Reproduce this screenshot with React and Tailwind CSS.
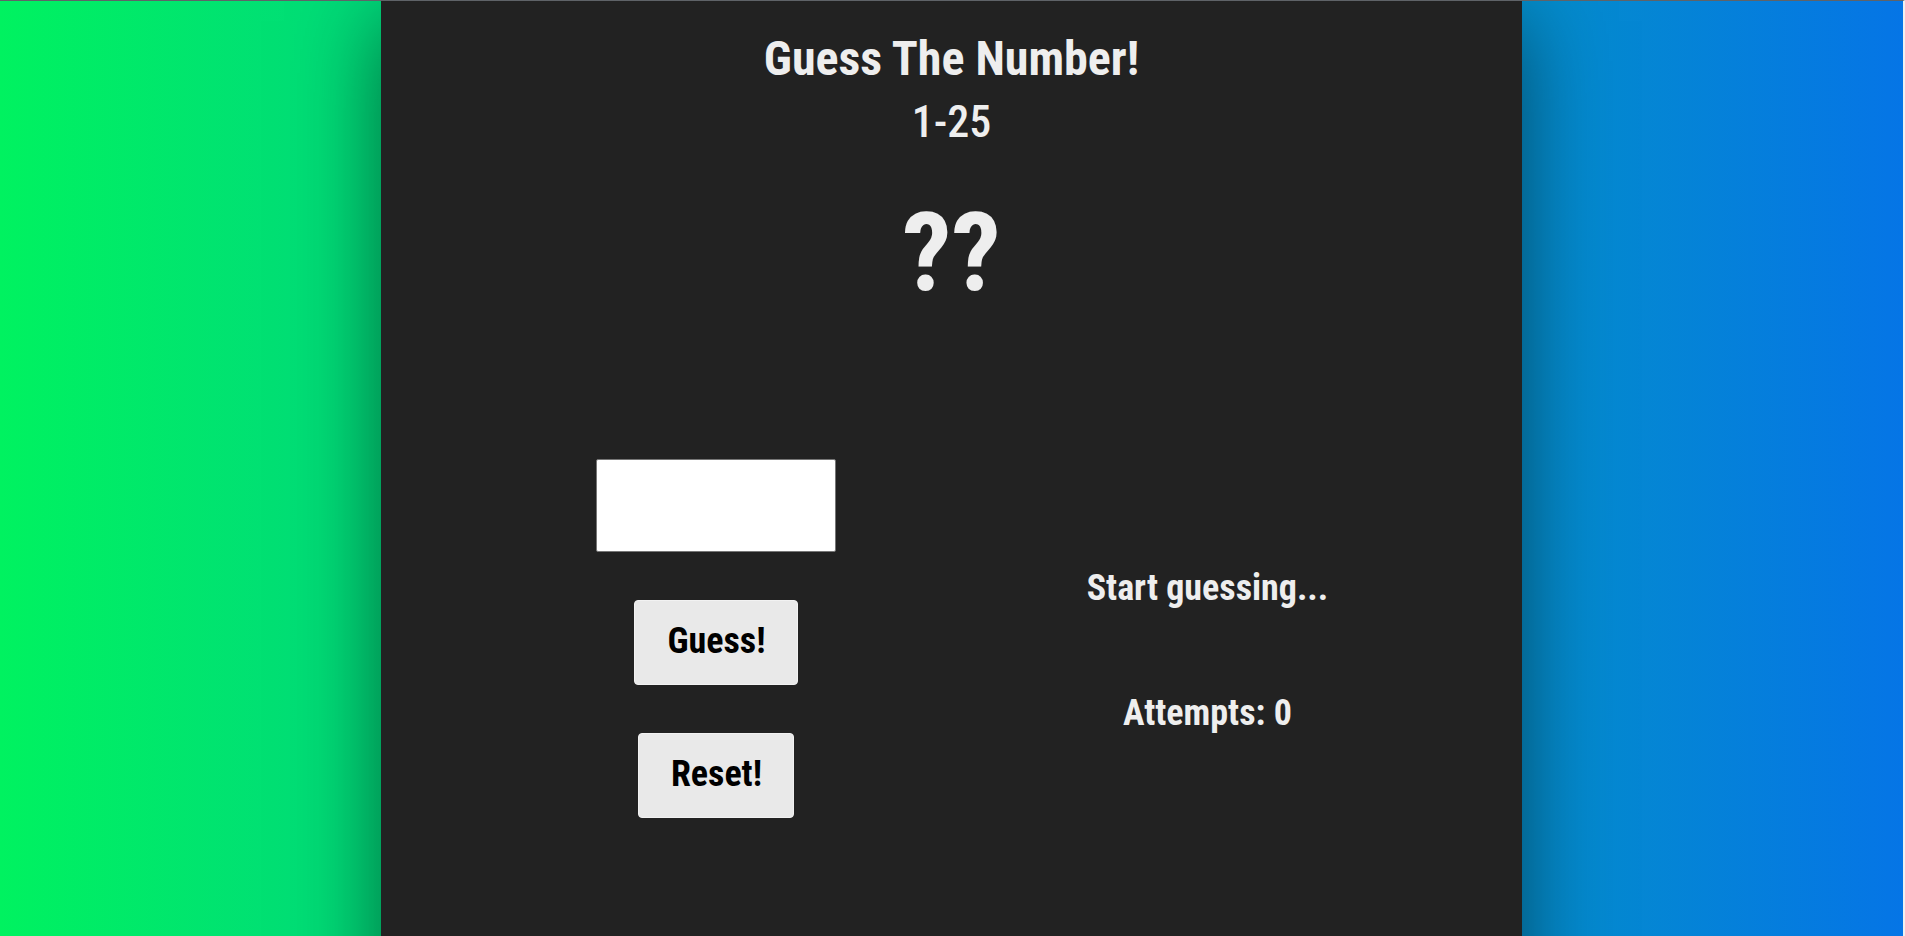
import { useState } from "react";

const BUTTON =
  "h-[85px] rounded border border-[#f2f2f2] bg-[#e9e9e9] pb-1 text-4xl text-black";

export default function App() {
  const [secret, setSecret] = useState(() => 1 + Math.floor(Math.random() * 25));
  const [guess, setGuess] = useState("");
  const [message, setMessage] = useState("Start guessing...");
  const [attempts, setAttempts] = useState(0);
  const [solved, setSolved] = useState(false);

  function submit(event) {
    event.preventDefault();
    const value = Number(guess);
    if (solved || !guess) return;
    setAttempts(attempts + 1);
    setSolved(value === secret);
    setMessage(value === secret ? "Correct!" : value > secret ? "Too high!" : "Too low!");
  }

  function reset() {
    setSecret(1 + Math.floor(Math.random() * 25));
    setGuess("");
    setMessage("Start guessing...");
    setAttempts(0);
    setSolved(false);
  }

  return (
    <div className="flex min-h-screen overflow-hidden border-t border-r-2 border-t-[#5f6368] border-r-[#f0f0f0] bg-linear-to-r/srgb from-[#00f260] to-[#0575e6] font-['Roboto_Condensed','Liberation_Sans_Narrow','Liberation_Sans',sans-serif] font-bold text-[#eeeeee]">
      <main className="mx-auto -mb-20 w-3/5 bg-[#222222] shadow-[0_20px_80px_rgba(0,0,0,0.5)]">
        <header className="flex flex-col items-center pt-7">
          <h1 className="text-5xl leading-[60px]">Guess The Number!</h1>
          <p className="mt-2 text-[44px] leading-[50px] font-medium">1-25</p>
          <p className="mt-12 text-[110px] leading-[116px]">{solved ? secret : "??"}</p>
        </header>
        <div className="mt-[148px] flex justify-center gap-64 pb-16 pl-4">
          <form onSubmit={submit} className="flex w-60 flex-col items-center gap-12">
            <input
              aria-label="Your guess"
              type="text"
              inputMode="numeric"
              value={guess}
              onChange={(e) => setGuess(e.target.value)}
              className="h-[93px] w-full rounded-xs border border-[#767676] bg-white px-4 text-center text-4xl text-black"
            />
            <button type="submit" className={BUTTON + " w-[164px]"}>Guess!</button>
            <button type="button" onClick={reset} className={BUTTON + " w-[156px]"}>Reset!</button>
          </form>
          <div className="flex w-[230px] flex-col items-center gap-[85px] pt-[109px] text-4xl whitespace-nowrap">
            <p>{message}</p>
            <p>Attempts: {attempts}</p>
          </div>
        </div>
      </main>
    </div>
  );
}
